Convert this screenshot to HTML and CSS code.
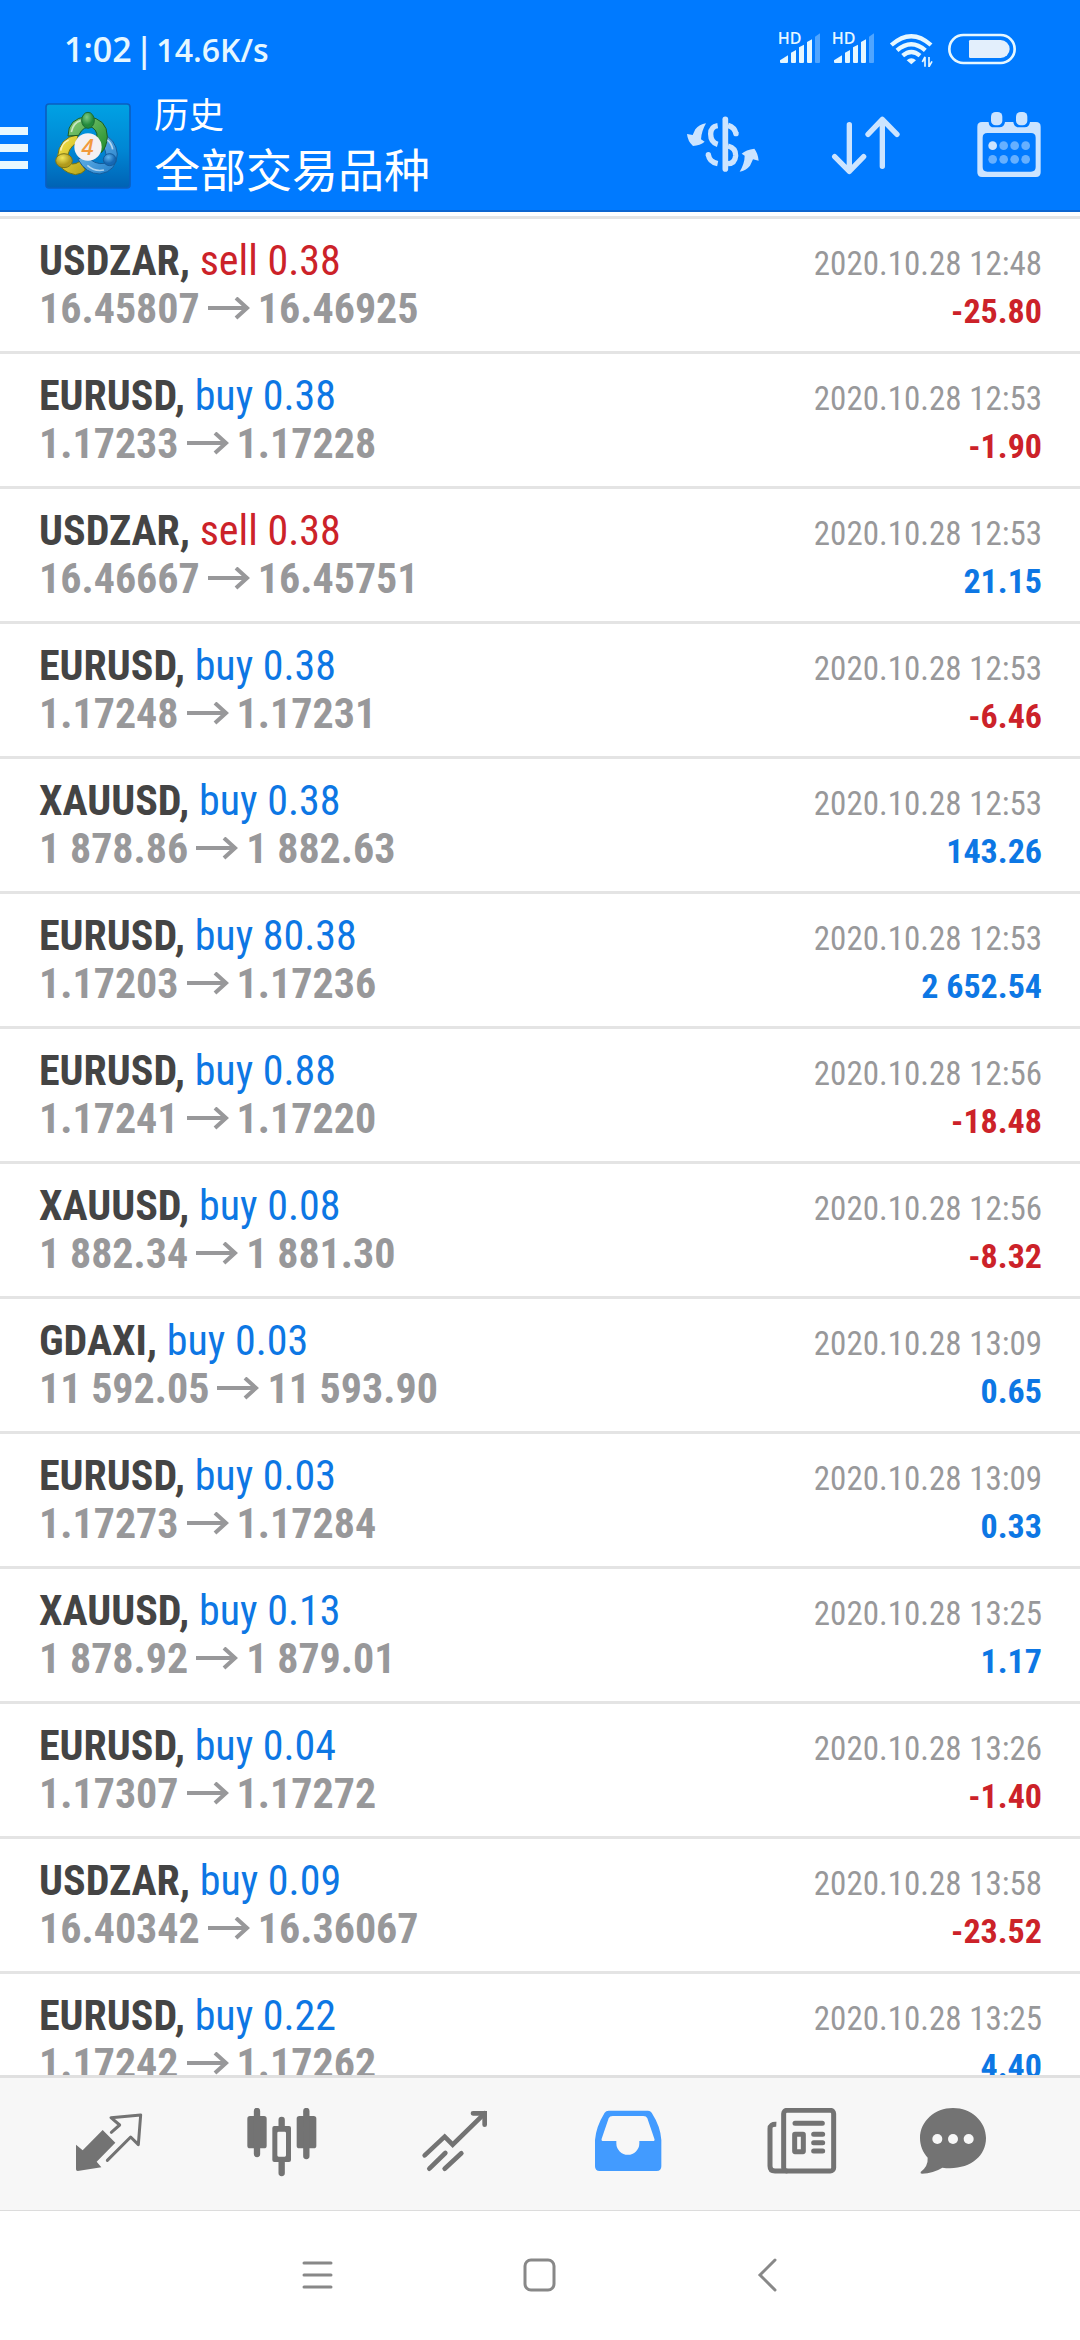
FILE: index.html
```html
<!DOCTYPE html>
<html lang="zh-CN">
<head>
<meta charset="utf-8">
<meta name="viewport" content="width=device-width, initial-scale=1">
<title>历史</title>
<link rel="stylesheet" href="styles.css">
</head>
<body>
<svg class="defs" aria-hidden="true">
  <symbol id="arrow" viewBox="0 0 42 24">
    <path d="M0 11H40M28 1L39 11L28 21" fill="none" stroke="currentColor" stroke-width="4"/>
  </symbol>
  <symbol id="signal" viewBox="357 93 126 108">
    <text class="hd" x="353" y="132">HD</text>
    <g fill="#e6f7ff">
      <path d="M360 181L384 166V186Q384 189 381 189H363Q360 189 360 186Z"/>
      <path d="M393 158L408 150V186Q408 189 405 189H396Q393 189 393 186Z"/>
      <path d="M417 142L432 134V186Q432 189 429 189H420Q417 189 417 186Z"/>
      <path d="M441 126L456 118V186Q456 189 453 189H444Q441 189 441 186Z"/>
      <path opacity=".35" d="M465 110L480 100V186Q480 189 477 189H468Q465 189 465 186Z"/>
    </g>
  </symbol>
</svg>

<header class="top">
  <div class="status">
    <div class="status-text"><span class="clock">1:02</span><span class="clock">|</span><span class="speed">14.6K/s</span></div>
    <div class="status-icons">
      <svg width="42" height="36"><use href="#signal"/></svg>
      <svg width="42" height="36"><use href="#signal"/></svg>
      <svg width="49" height="36" viewBox="681 93 147 108">
        <g fill="none" stroke="#e6f7ff" stroke-width="13">
          <path d="M694 135Q754 82 813 135"/>
          <path d="M711 151Q754 114 796 151"/>
          <path d="M728 167Q754 145 780 167"/>
        </g>
        <path d="M740 181Q754 169 768 181L754 193Z" fill="#e6f7ff"/>
        <path d="M787 186L795 171V200M816 184L807 200V171" fill="none" stroke="#e6f7ff" stroke-width="5"/>
      </svg>
      <svg width="68" height="36" viewBox="864 93 204 108">
        <rect x="868" y="105" width="196" height="84" rx="42" fill="none" stroke="#e6f7ff" stroke-width="8"/>
        <path d="M931 120H1022A27 27 0 0 1 1022 174H931Q927 174 927 170V124Q927 120 931 120Z" fill="#e3effc"/>
      </svg>
    </div>
  </div>
  <div class="appbar">
    <button class="menu" aria-label="菜单"><span></span><span></span><span></span></button>
    <svg class="logo" viewBox="135 39 258 258">
      <defs>
        <linearGradient id="lb" x1="0" y1="0" x2="0" y2="1"><stop offset="0" stop-color="#00a2e4"/><stop offset=".55" stop-color="#0086d4"/><stop offset="1" stop-color="#0062b4"/></linearGradient>
        <linearGradient id="lg" x1="0" y1="0" x2="1" y2="1"><stop offset="0" stop-color="#8ed07c"/><stop offset="1" stop-color="#1c8a28"/></linearGradient>
        <linearGradient id="ly" x1="0" y1="0" x2="1" y2="1"><stop offset="0" stop-color="#fbe84a"/><stop offset="1" stop-color="#b3a018"/></linearGradient>
        <linearGradient id="lu" x1="0" y1="0" x2="1" y2="1"><stop offset="0" stop-color="#7cc4f2"/><stop offset="1" stop-color="#1f7cc8"/></linearGradient>
        <radialGradient id="hg" cx=".4" cy=".3"><stop offset="0" stop-color="#7ccb86"/><stop offset="1" stop-color="#238a3c"/></radialGradient>
        <radialGradient id="hy" cx=".4" cy=".3"><stop offset="0" stop-color="#f2e65a"/><stop offset="1" stop-color="#b09a1c"/></radialGradient>
        <radialGradient id="hu" cx=".4" cy=".3"><stop offset="0" stop-color="#5fb4ee"/><stop offset="1" stop-color="#1668b4"/></radialGradient>
      </defs>
      <rect x="138" y="42" width="252" height="252" rx="9" fill="url(#lb)" stroke="#0a5fc0" stroke-width="5"/>
      <g stroke-width="3">
        <path d="M234 134Q176 142 172 204Q178 246 226 254Q246 252 256 240L240 214Q214 232 202 210Q202 176 230 158Z" fill="url(#ly)" stroke="#6f7414"/>
        <path d="M304 130Q348 146 352 192Q350 244 300 252Q258 252 234 208L258 196Q284 226 314 220Q326 196 308 166Z" fill="url(#lu)" stroke="#145c9c"/>
        <path d="M204 138Q204 84 262 80Q322 86 322 140Q320 172 304 188L286 160Q300 126 276 112Q250 106 236 136Z" fill="url(#lg)" stroke="#1d5d24"/>
        <ellipse cx="264" cy="91" rx="19" ry="24" fill="url(#hg)" stroke="#1d6a30"/>
        <ellipse cx="192" cy="212" rx="25" ry="21" fill="url(#hy)" stroke="#7c7618"/>
        <ellipse cx="329" cy="209" rx="19" ry="18" fill="url(#hu)" stroke="#145c9c"/>
      </g>
      <path d="M214 126Q220 98 242 92M182 182Q186 158 206 150M338 178Q334 158 322 150M262 226Q284 246 312 240" fill="none" stroke="#fff" stroke-opacity=".6" stroke-width="5"/>
      <circle cx="264" cy="171" r="41" fill="#f4f0f2"/>
      <text class="four" x="263" y="196" text-anchor="middle">4</text>
    </svg>
    <div class="titles">
      <p class="subtitle">历史</p>
      <h1 class="title">全部交易品种</h1>
    </div>
    <div class="actions">
      <button class="action" aria-label="交易品种">
        <svg width="72" height="72" viewBox="79 330 216 216">
          <path d="M136 370Q116 373 104 388L96 405L79 402Q81 424 97 438Q118 436 132 425L121 418Q122 395 136 370Z" fill="currentColor"/>
          <path d="M237 515Q256 512 268 497L277 478L294 482Q292 460 281 446Q256 449 243 461L252 467Q252 490 237 515Z" fill="currentColor"/>
          <path d="M194 358V507" fill="none" stroke="currentColor" stroke-width="17" stroke-linecap="round"/>
          <path d="M171 377Q150 380 150 402Q150 427 171 433M143 464Q146 486 171 491M202 376Q222 382 226 401M202 438Q226 444 225 467Q223 490 202 491" fill="none" stroke="currentColor" stroke-width="16"/>
          <circle cx="226" cy="401" r="8" fill="currentColor"/>
          <circle cx="143" cy="464" r="8" fill="currentColor"/>
        </svg>
      </button>
      <button class="action" aria-label="排序">
        <svg width="72" height="72" viewBox="508 330 216 216">
          <path d="M566 374V514M522 470L566 514L609 470M665 499V358M622 403L665 358L709 403" fill="none" stroke="currentColor" stroke-width="16" stroke-linecap="round" stroke-linejoin="round"/>
        </svg>
      </button>
      <button class="action" aria-label="日期">
        <svg width="72" height="72" viewBox="937 330 216 216">
          <path fill="currentColor" fill-rule="evenodd" d="M964 366H984V368Q986 382 1000 382H1016Q1031 382 1033 366H1058Q1060 382 1074 382H1092Q1106 382 1108 366H1126Q1140 366 1140 380V517Q1140 531 1126 531H964Q950 531 950 517V380Q950 366 964 366ZM980 399Q966 399 966 413V501Q966 515 980 515H1111Q1125 515 1125 501V413Q1125 399 1111 399Z"/>
          <rect x="991" y="336" width="34" height="40" rx="14" fill="currentColor"/>
          <rect x="1066" y="336" width="34" height="40" rx="14" fill="currentColor"/>
          <circle cx="996" cy="437" r="13" fill="currentColor"/>
          <g fill="#66b0ff"><circle cx="1029" cy="437" r="13"/><circle cx="1062" cy="437" r="13"/><circle cx="1095" cy="437" r="13"/><circle cx="996" cy="478" r="13"/><circle cx="1029" cy="478" r="13"/><circle cx="1062" cy="478" r="13"/><circle cx="1095" cy="478" r="13"/></g>
        </svg>
      </button>
    </div>
  </div>
</header>

<main class="history">
  <ul class="deals">
    <li class="deal"><div class="line"><span class="symbol">USDZAR, <span class="sell">sell 0.38</span></span><time class="time">2020.10.28 12:48</time></div><div class="line"><span class="prices">16.45807<svg class="to"><use href="#arrow"/></svg>16.46925</span><span class="profit loss">-25.80</span></div></li>
    <li class="deal"><div class="line"><span class="symbol">EURUSD, <span class="buy">buy 0.38</span></span><time class="time">2020.10.28 12:53</time></div><div class="line"><span class="prices">1.17233<svg class="to"><use href="#arrow"/></svg>1.17228</span><span class="profit loss">-1.90</span></div></li>
    <li class="deal"><div class="line"><span class="symbol">USDZAR, <span class="sell">sell 0.38</span></span><time class="time">2020.10.28 12:53</time></div><div class="line"><span class="prices">16.46667<svg class="to"><use href="#arrow"/></svg>16.45751</span><span class="profit">21.15</span></div></li>
    <li class="deal"><div class="line"><span class="symbol">EURUSD, <span class="buy">buy 0.38</span></span><time class="time">2020.10.28 12:53</time></div><div class="line"><span class="prices">1.17248<svg class="to"><use href="#arrow"/></svg>1.17231</span><span class="profit loss">-6.46</span></div></li>
    <li class="deal"><div class="line"><span class="symbol">XAUUSD, <span class="buy">buy 0.38</span></span><time class="time">2020.10.28 12:53</time></div><div class="line"><span class="prices">1 878.86<svg class="to"><use href="#arrow"/></svg>1 882.63</span><span class="profit">143.26</span></div></li>
    <li class="deal"><div class="line"><span class="symbol">EURUSD, <span class="buy">buy 80.38</span></span><time class="time">2020.10.28 12:53</time></div><div class="line"><span class="prices">1.17203<svg class="to"><use href="#arrow"/></svg>1.17236</span><span class="profit">2 652.54</span></div></li>
    <li class="deal"><div class="line"><span class="symbol">EURUSD, <span class="buy">buy 0.88</span></span><time class="time">2020.10.28 12:56</time></div><div class="line"><span class="prices">1.17241<svg class="to"><use href="#arrow"/></svg>1.17220</span><span class="profit loss">-18.48</span></div></li>
    <li class="deal"><div class="line"><span class="symbol">XAUUSD, <span class="buy">buy 0.08</span></span><time class="time">2020.10.28 12:56</time></div><div class="line"><span class="prices">1 882.34<svg class="to"><use href="#arrow"/></svg>1 881.30</span><span class="profit loss">-8.32</span></div></li>
    <li class="deal"><div class="line"><span class="symbol">GDAXI, <span class="buy">buy 0.03</span></span><time class="time">2020.10.28 13:09</time></div><div class="line"><span class="prices">11 592.05<svg class="to"><use href="#arrow"/></svg>11 593.90</span><span class="profit">0.65</span></div></li>
    <li class="deal"><div class="line"><span class="symbol">EURUSD, <span class="buy">buy 0.03</span></span><time class="time">2020.10.28 13:09</time></div><div class="line"><span class="prices">1.17273<svg class="to"><use href="#arrow"/></svg>1.17284</span><span class="profit">0.33</span></div></li>
    <li class="deal"><div class="line"><span class="symbol">XAUUSD, <span class="buy">buy 0.13</span></span><time class="time">2020.10.28 13:25</time></div><div class="line"><span class="prices">1 878.92<svg class="to"><use href="#arrow"/></svg>1 879.01</span><span class="profit">1.17</span></div></li>
    <li class="deal"><div class="line"><span class="symbol">EURUSD, <span class="buy">buy 0.04</span></span><time class="time">2020.10.28 13:26</time></div><div class="line"><span class="prices">1.17307<svg class="to"><use href="#arrow"/></svg>1.17272</span><span class="profit loss">-1.40</span></div></li>
    <li class="deal"><div class="line"><span class="symbol">USDZAR, <span class="buy">buy 0.09</span></span><time class="time">2020.10.28 13:58</time></div><div class="line"><span class="prices">16.40342<svg class="to"><use href="#arrow"/></svg>16.36067</span><span class="profit loss">-23.52</span></div></li>
    <li class="deal"><div class="line"><span class="symbol">EURUSD, <span class="buy">buy 0.22</span></span><time class="time">2020.10.28 13:25</time></div><div class="line"><span class="prices">1.17242<svg class="to"><use href="#arrow"/></svg>1.17262</span><span class="profit">4.40</span></div></li>
  </ul>
</main>

<nav class="tabs">
  <button class="tab" aria-label="行情">
    <svg width="72" height="72" viewBox="68 54 216 216">
      <path d="M77 164L97 181L157 120L195 158L139 215L153 232L82 243Q77 243 77 238Z" fill="currentColor"/>
      <path d="M183 127L208 105L182 83L271 75L264 164L241 141L171 211" fill="none" stroke="currentColor" stroke-width="9" stroke-linecap="round" stroke-linejoin="round"/>
    </svg>
  </button>
  <button class="tab" aria-label="图表">
    <svg width="72" height="72" viewBox="586 54 216 216">
      <g fill="currentColor"><rect x="590" y="78" width="58" height="97" rx="8"/><rect x="738" y="78" width="59" height="97" rx="8"/></g>
      <path d="M619 63V192M767 63V198M693 90V112M693 212V249" stroke="currentColor" stroke-width="19" stroke-linecap="round"/>
      <path fill="#f7f7f7" d="M678 118H710V206H678Z"/>
      <path fill="currentColor" fill-rule="evenodd" d="M671 108H715Q721 108 721 114V210Q721 216 715 216H671Q665 216 665 210V114Q665 108 671 108ZM684 125Q680 125 680 129V196Q680 200 684 200H702Q706 200 706 196V129Q706 125 702 125Z"/>
    </svg>
  </button>
  <button class="tab" aria-label="交易">
    <svg width="72" height="72" viewBox="1105 54 216 216">
      <path d="M1122 196L1182 140L1206 164L1302 70M1136 236L1184 189M1182 236L1232 190" fill="none" stroke="currentColor" stroke-width="14" stroke-linecap="round"/>
      <path d="M1267 70H1302V104" fill="none" stroke="currentColor" stroke-width="14" stroke-linecap="round"/>
    </svg>
  </button>
  <button class="tab active" aria-label="历史">
    <svg width="72" height="72" viewBox="64 54 216 216">
      <path fill="currentColor" fill-rule="evenodd" d="M114 62H232Q239 62 243 68Q270 110 272 150V229Q272 243 258 243H87Q73 243 73 229V150Q76 110 102 68Q106 62 114 62ZM126 78Q117 78 114 85L93 146Q91 153 98 153H137V160A34 34 0 0 0 206 160V153H246Q254 153 251 146L230 85Q227 78 218 78Z"/>
    </svg>
  </button>
  <button class="tab" aria-label="新闻">
    <svg width="72" height="72" viewBox="583 54 216 216">
      <rect x="639" y="61" width="150" height="182" rx="10" fill="none" stroke="currentColor" stroke-width="15"/>
      <path d="M617 103Q598 102 598 116V228Q598 243 613 243H650" fill="none" stroke="currentColor" stroke-width="15"/>
      <path d="M673 100H755M729 133H756M729 158H756M729 183H756" stroke="currentColor" stroke-width="15" stroke-linecap="round"/>
      <rect x="672" y="133" width="26" height="52" rx="1" fill="none" stroke="currentColor" stroke-width="15" stroke-linejoin="round"/>
    </svg>
  </button>
  <button class="tab" aria-label="消息">
    <svg width="72" height="72" viewBox="1041 54 216 216">
      <path fill="currentColor" d="M1149 54C1204 54 1248 94 1248 144C1248 202 1194 243 1117 233Q1090 250 1056 251Q1050 251 1052 246Q1075 228 1073 203C1058 186 1050 166 1050 144C1050 94 1094 54 1149 54Z"/>
      <g fill="#f7f7f7"><circle cx="1102" cy="147" r="15"/><circle cx="1149" cy="147" r="15"/><circle cx="1196" cy="147" r="15"/></g>
    </svg>
  </button>
</nav>

<nav class="system">
  <button class="key" aria-label="最近任务"><svg width="36" height="36" viewBox="0 0 36 36"><path d="M7 5H34M7 17H34M7 29H34"/></svg></button>
  <button class="key" aria-label="主屏幕"><svg width="36" height="36" viewBox="0 0 36 36"><rect x="3" y="2" width="29" height="30" rx="6"/></svg></button>
  <button class="key" aria-label="返回"><svg width="36" height="36" viewBox="0 0 36 36"><path d="M28 2L13 17L28 32"/></svg></button>
</nav>
</body>
</html>
```
FILE: styles.css
```css
* {
  box-sizing: border-box;
  margin: 0;
  padding: 0;
}

body {
  display: flex;
  flex-direction: column;
  height: 100vh;
  overflow: hidden;
  background: #fff;
  font-family: "Roboto Condensed", Roboto, "Noto Sans CJK SC", sans-serif;
}

button {
  border: 0;
  background: none;
  color: inherit;
  font: inherit;
}

svg {
  display: block;
  flex: none;
}

.defs {
  display: none;
}

/* Header */
.top {
  flex: none;
  background: #007aff;
  border-bottom: 2px solid #0d66d0;
  color: #fff;
}

.status {
  display: flex;
  align-items: center;
  justify-content: space-between;
  height: 82px;
  padding: 16px 64px 0;
  color: #e6f7ff;
  font-family: "Open Sans", sans-serif;
  font-weight: 600;
}

.status-text {
  display: flex;
  align-items: baseline;
  gap: 3px;
}

.clock {
  font-size: 34px;
}

.speed {
  font-size: 32px;
}

.status-icons {
  display: flex;
  align-items: center;
  gap: 12px;
}

.hd {
  fill: #e6f7ff;
  font-size: 48px;
}

.appbar {
  display: flex;
  align-items: center;
  height: 128px;
}

.menu {
  display: flex;
  flex-direction: column;
  gap: 9px;
  width: 28px;
  padding-top: 4px;
}

.menu span {
  height: 8px;
  background: #e8f8ff;
}

.logo {
  width: 86px;
  height: 86px;
  margin: 0 23px 0 17px;
}

.four {
  fill: #f29a3c;
  font: italic 600 66px "Open Sans", sans-serif;
}

.titles {
  flex: 1;
  padding-bottom: 6px;
  font-family: "Noto Sans CJK SC", sans-serif;
}

.subtitle {
  font-size: 35px;
  line-height: 48px;
}

.title {
  font-size: 46px;
  font-weight: 400;
  line-height: 60px;
}

.actions {
  display: flex;
  color: #cce4ff;
}

.action {
  display: flex;
  justify-content: center;
  width: 143px;
}

/* Deals */
.history {
  flex: 1;
  min-height: 0;
  overflow: hidden;
  padding-top: 4px;
}

.deals {
  list-style: none;
}

.deal {
  padding: 18px 38px 18px 39px;
  border-top: 3px solid #e4e4e4;
}

.line {
  display: flex;
  align-items: baseline;
  justify-content: space-between;
  height: 48px;
  line-height: 48px;
}

.symbol {
  color: #444;
  font-size: 42px;
  font-weight: 700;
}

.sell,
.buy {
  font-weight: 400;
}

.sell {
  color: #cc2229;
}

.buy {
  color: #0d77e4;
}

.prices {
  display: flex;
  align-items: center;
  gap: 8px;
  color: #98989a;
  font-size: 42px;
  font-weight: 700;
}

.to {
  width: 42px;
  height: 24px;
}

.time {
  color: #98989a;
  font-size: 33px;
}

.profit {
  color: #0d77e4;
  font-size: 34px;
  font-weight: 700;
}

.loss {
  color: #cc2229;
}

/* Bottom tabs */
.tabs {
  display: grid;
  grid-template-columns: repeat(5, 173fr) 132fr;
  flex: none;
  height: 136px;
  padding: 0 61px 0 22px;
  border-top: 3px solid #e0e0e0;
  border-bottom: 1px solid #dcdcdc;
  background: #f7f7f7;
  color: #737373;
}

.tab {
  display: flex;
  align-items: center;
  justify-content: center;
}

.active {
  color: #429bff;
}

/* System keys */
.system {
  display: flex;
  align-items: center;
  justify-content: center;
  flex: none;
  height: 129px;
}

.key {
  display: flex;
  justify-content: center;
  width: 225px;
  color: #888;
}

.key svg {
  fill: none;
  stroke: currentColor;
  stroke-width: 3;
  stroke-linecap: round;
}
```
